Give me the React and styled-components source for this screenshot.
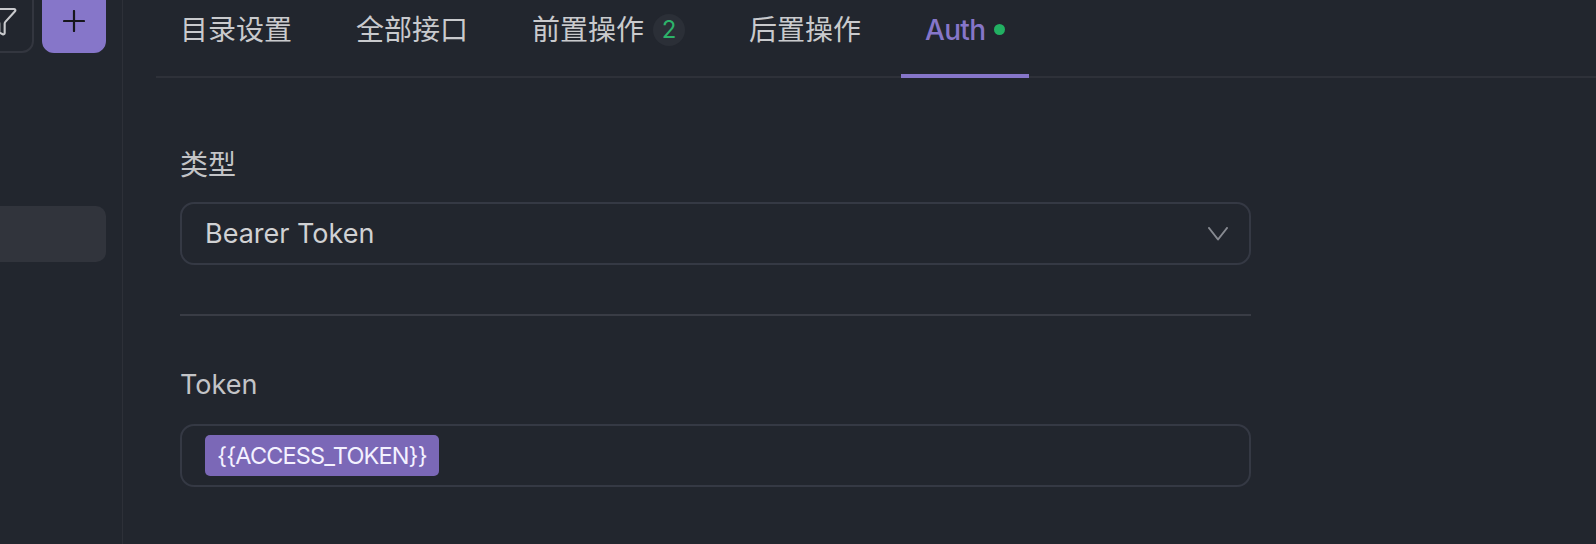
import React from "react";
import styled, { createGlobalStyle } from "styled-components";

const GlobalStyle = createGlobalStyle`
  html, body {
    margin: 0;
    padding: 0;
    background: #22262e;
  }
  body {
    font-family: Inter, "Noto Sans CJK SC", sans-serif;
  }
`;

const Page = styled.div`
  display: flex;
  height: 544px;
  overflow: hidden;
  background: #22262e;
`;

const Sidebar = styled.aside`
  width: 122px;
  flex-shrink: 0;
  border-right: 1px solid #2d3038;
  overflow: hidden;
`;

const SideInner = styled.div`
  display: flex;
  flex-direction: column;
  margin: -11px 16px 0 -30px;
`;

const Toolbar = styled.div`
  display: flex;
  gap: 8px;
`;

const IconButton = styled.button`
  width: 64px;
  height: 64px;
  padding: 0;
  box-sizing: border-box;
  border-radius: 12px;
  display: flex;
  align-items: center;
  justify-content: center;
  border: 2px solid ${(p) => (p.$primary ? "#8676c9" : "#33363f")};
  background: ${(p) => (p.$primary ? "#8676c9" : "transparent")};
  color: ${(p) => (p.$primary ? "#16161c" : "#c9cacd")};
  cursor: pointer;
`;

const SideItem = styled.div`
  margin-top: 153px;
  height: 56px;
  border-radius: 10px;
  background: #31343c;
`;

const Main = styled.main`
  flex: 1;
  min-width: 0;
  padding-left: 33px;
  display: flex;
  flex-direction: column;
`;

const TabBar = styled.nav`
  display: flex;
  gap: 16px;
  height: 78px;
  box-sizing: border-box;
  border-bottom: 2px solid #2e3139;
`;

const Tab = styled.div`
  position: relative;
  display: flex;
  align-items: flex-start;
  gap: 9px;
  height: 76px;
  box-sizing: border-box;
  padding: 10px 24px 0;
  font-size: 28px;
  line-height: 40px;
  font-weight: ${(p) => (p.$active ? 500 : 400)};
  letter-spacing: ${(p) => (p.$active ? "-0.7px" : "0")};
  color: ${(p) => (p.$active ? "#8676c9" : "#c9cacd")};
  white-space: nowrap;
  cursor: pointer;

  &::after {
    content: "";
    display: ${(p) => (p.$active ? "block" : "none")};
    position: absolute;
    left: 0;
    right: 0;
    bottom: -2px;
    height: 4px;
    background: #8676c9;
  }
`;

const Count = styled.span`
  width: 32px;
  height: 32px;
  margin-top: 4px;
  border-radius: 50%;
  background: #2b2f37;
  color: #2db36a;
  font-size: 24px;
  line-height: 32px;
  text-align: center;
`;

const Dot = styled.span`
  width: 11px;
  height: 11px;
  margin-top: 14px;
  border-radius: 50%;
  background: #22b062;
`;

const Form = styled.section`
  width: 1071px;
  padding: 67px 0 0 24px;
  display: flex;
  flex-direction: column;
`;

const Label = styled.div`
  font-size: ${(p) => p.$size}px;
  line-height: 40px;
  color: #c3c4c7;
  margin-bottom: ${(p) => p.$gap}px;
`;

const Field = styled.div`
  height: 63px;
  box-sizing: border-box;
  border: 2px solid #353944;
  border-radius: 14px;
  display: flex;
  align-items: center;
  justify-content: space-between;
  padding: 0 21px 0 23px;
  font-size: 27px;
  color: #d0d1d3;
`;

const Divider = styled.hr`
  border: 0;
  height: 2px;
  margin: 49px 0;
  background: #393c45;
`;

const Chip = styled.span`
  display: inline-flex;
  align-items: center;
  height: 41px;
  padding: 0 12px;
  border-radius: 5px;
  background: #7b68b7;
  color: #f4f1ff;
  font-size: 23.5px;
  letter-spacing: -0.85px;
`;

const FilterIcon = () => (
  <svg width="32" height="32" viewBox="0 0 24 24" fill="none" stroke="currentColor" strokeWidth="1.6" strokeLinecap="round" strokeLinejoin="round">
    <path d="M10 20a1 1 0 0 0 .553.895l2 1A1 1 0 0 0 14 21v-7a2 2 0 0 1 .517-1.341L21.74 4.67A1 1 0 0 0 21 3H3a1 1 0 0 0-.742 1.67l7.225 7.989A2 2 0 0 1 10 14z" />
  </svg>
);

const PlusIcon = () => (
  <svg width="22" height="22" viewBox="0 0 22 22" fill="none" stroke="currentColor" strokeWidth="2.2" strokeLinecap="round">
    <path d="M11 1v20M1 11h20" />
  </svg>
);

const Chevron = () => (
  <svg width="20" height="14" viewBox="0 0 20 14" fill="none" stroke="#878a91" strokeWidth="2" strokeLinecap="round" strokeLinejoin="round">
    <polyline points="1,1 10,12.5 19,1" />
  </svg>
);

export default function App() {
  return (
    <>
      <GlobalStyle />
      <Page>
        <Sidebar>
          <SideInner>
            <Toolbar>
              <IconButton>
                <FilterIcon />
              </IconButton>
              <IconButton $primary>
                <PlusIcon />
              </IconButton>
            </Toolbar>
            <SideItem />
          </SideInner>
        </Sidebar>
        <Main>
          <TabBar>
            <Tab>目录设置</Tab>
            <Tab>全部接口</Tab>
            <Tab>
              前置操作
              <Count>2</Count>
            </Tab>
            <Tab>后置操作</Tab>
            <Tab $active>
              Auth
              <Dot />
            </Tab>
          </TabBar>
          <Form>
            <Label $size={28} $gap={17}>类型</Label>
            <Field>
              Bearer Token
              <Chevron />
            </Field>
            <Divider />
            <Label $size={27} $gap={19}>Token</Label>
            <Field>
              <Chip>{"{{ACCESS_TOKEN}}"}</Chip>
            </Field>
          </Form>
        </Main>
      </Page>
    </>
  );
}
